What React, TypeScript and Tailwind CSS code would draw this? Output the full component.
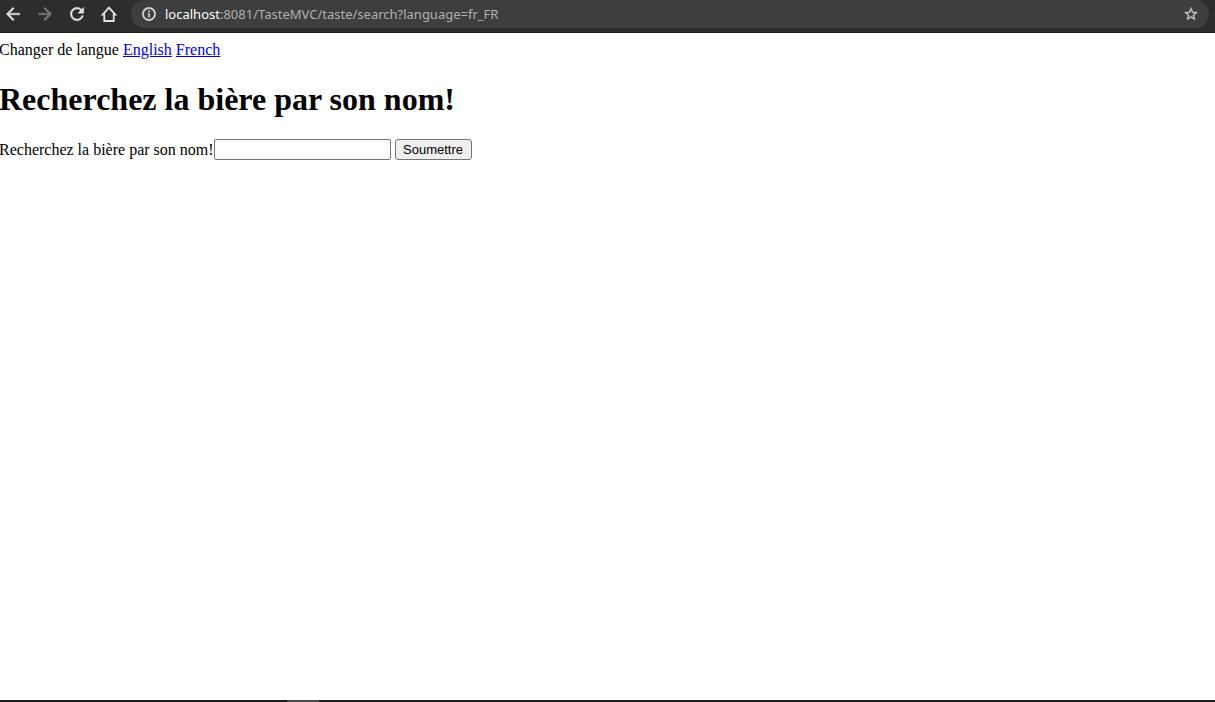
import React from "react";

const paths = {
  back: "M20 11H7.830l5.590-5.590L12 4l-8 8 8 8 1.410-1.410L7.830 13H20v-2z",
  forward: "M12 4l-1.410 1.410L16.170 11H4v2h12.170l-5.580 5.590L12 20l8-8z",
  refresh:
    "M17.650 6.350A7.958 7.958 0 0 0 12 4c-4.420 0-7.990 3.580-7.990 8s3.570 8 7.990 8c3.730 0 6.840-2.550 7.730-6h-2.080A5.990 5.990 0 0 1 12 18c-3.310 0-6-2.690-6-6s2.690-6 6-6c1.660 0 3.140.690 4.220 1.780L13 11h7V4l-2.350 2.350z",
  info: "M11 7h2v2h-2zm0 4h2v6h-2zm1-9C6.480 2 2 6.480 2 12s4.480 10 10 10 10-4.480 10-10S17.520 2 12 2zm0 18c-4.410 0-8-3.590-8-8s3.590-8 8-8 8 3.590 8 8-3.590 8-8 8z",
  star: "M22 9.240l-7.190-.620L12 2 9.190 8.630 2 9.240l5.460 4.730L5.820 21 12 17.270 18.180 21l-1.630-7.030L22 9.240zM12 15.400l-3.760 2.270 1-4.280-3.320-2.880 4.380-.380L12 6.100l1.710 4.040 4.380.380-3.320 2.880 1 4.280L12 15.400z",
};

function Icon({ name, size }: { name: keyof typeof paths; size: number }) {
  return (
    <svg
      width={size}
      height={size}
      viewBox="0 0 24 24"
      fill="currentColor"
      stroke="currentColor"
      strokeWidth="0.5"
      className="shrink-0"
      aria-hidden="true"
    >
      <path d={paths[name]} />
    </svg>
  );
}

function HomeIcon() {
  return (
    <svg width="20" height="20" viewBox="0 0 20 20" fill="none" stroke="currentColor" strokeWidth="1.8" aria-hidden="true">
      <path d="M3.700 10.600 10 3.700l6.300 6.900H14.700V17H5.300v-6.400Z" />
    </svg>
  );
}

function Toolbar() {
  return (
    <header className="flex h-[33px] items-start border-b border-[#1c1c1c] bg-[#2d2d2d] pr-1.5 text-[#e3e3e3]">
      <nav className="flex h-7 items-center gap-3 pl-[3px]" aria-label="Navigation">
        <button type="button" aria-label="Retour"><Icon name="back" size={20} /></button>
        <button type="button" aria-label="Avancer" className="text-[#7a7a7a]"><Icon name="forward" size={20} /></button>
        <button type="button" aria-label="Actualiser"><Icon name="refresh" size={20} /></button>
        <button type="button" aria-label="Accueil"><HomeIcon /></button>
      </nav>
      <div className="ml-3 flex h-7 min-w-0 flex-1 items-center rounded-full bg-[#3e3e3e] px-2.5">
        <Icon name="info" size={16} />
        <div className="ml-2 min-w-0 flex-1 truncate font-['Noto_Sans',sans-serif] text-[13px] leading-5 text-[#b0b0b0]">
          <span className="text-white">localhost</span>:8081/TasteMVC/taste/search?language=fr_FR
        </div>
        <button type="button" aria-label="Ajouter aux favoris" className="text-[#c8c8c8]"><Icon name="star" size={16} /></button>
      </div>
    </header>
  );
}

export default function App() {
  return (
    <div className="flex min-h-screen flex-col overflow-x-hidden bg-white text-black">
      <Toolbar />
      <main className="-ml-px flex-1 pt-2 font-['Liberation_Serif',serif] text-[16px] leading-[18px]">
        <div>
          Changer de langue{" "}
          <a href="?language=en_US" className="text-[#0000ee] underline">English</a>{" "}
          <a href="?language=fr_FR" className="text-[#0000ee] underline">French</a>
        </div>
        <h1 className="mt-[22px] text-[32px] leading-[37px] font-bold">Recherchez la bière par son nom!</h1>
        <form className="mt-[21px] flex items-center" onSubmit={(e) => e.preventDefault()}>
          <label htmlFor="name">Recherchez la bière par son nom!</label>
          <input
            id="name"
            name="name"
            type="text"
            className="h-[21px] w-[177px] rounded-xs border border-[#767676] bg-white px-0.5 font-['Liberation_Sans',sans-serif] text-[13px]"
          />
          <button
            type="submit"
            className="ml-1 flex h-[21px] w-[77px] items-center justify-center rounded-[3px] border border-[#767676] bg-[#efefef] font-['Liberation_Sans',sans-serif] text-[13px]"
          >
            Soumettre
          </button>
        </form>
      </main>
      <footer className="flex h-0.5 bg-[#1f1b1b]">
        <div className="ml-[287px] h-0.5 w-8 bg-[#4c4a4a]" />
        <div className="ml-1 h-0.5 flex-1 bg-[#1f1d1a]" />
      </footer>
    </div>
  );
}
